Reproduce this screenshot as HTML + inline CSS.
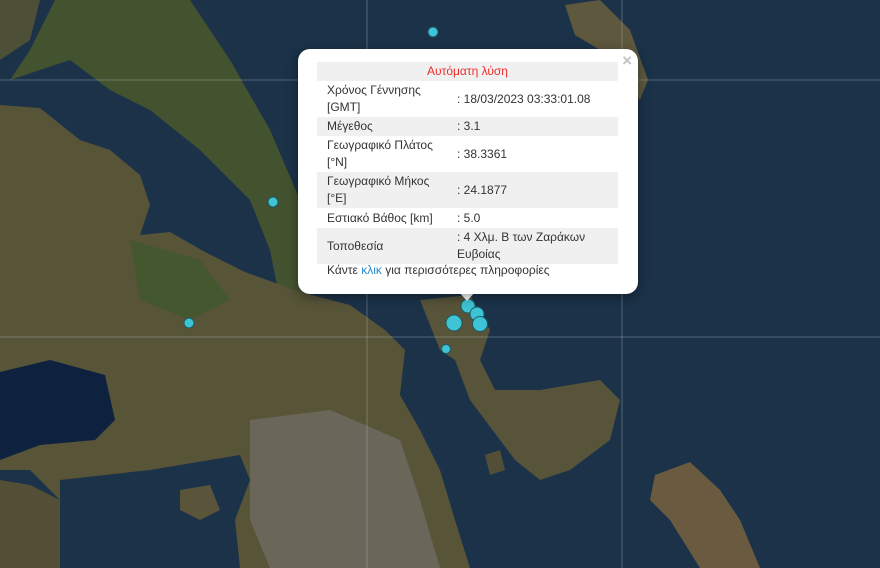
<!DOCTYPE html>
<html><head><meta charset="utf-8"><style>
body{margin:0;width:880px;height:568px;overflow:hidden;background:#1b3248;font-family:"Liberation Sans",sans-serif;}
svg{position:absolute;left:0;top:0}
.pop{position:absolute;left:298px;top:49px;width:340px;height:245px;background:#fff;border-radius:12px;box-shadow:0 3px 12px rgba(0,0,0,.4);}
.tip{position:absolute;left:459px;top:292px;width:0;height:0;border-left:8px solid transparent;border-right:8px solid transparent;border-top:9px solid #fff;}
.x{position:absolute;right:6px;top:2px;color:#c3c3c3;font-size:17px;font-weight:bold}
table{position:absolute;left:19px;top:13px;width:301px;border-collapse:collapse;font-size:12px;color:#333;line-height:17px}
td{padding:1px 10px;vertical-align:middle}
tr.g{background:#f0f0f0}
td.v{padding-left:0}
.ft{position:absolute;left:29px;top:214px;font-size:12px;color:#333}
.ft span{color:#2a8ac5}
</style></head><body>
<svg width="880" height="568" viewBox="0 0 880 568">
<rect width="880" height="568" fill="#1b3248"/>
<path d="M0 0H40L30 40 0 60Z" fill="#4d5036"/>
<path d="M55 0H190L230 60 270 130 300 200 310 290 280 300 270 250 250 200 200 150 150 110 110 90 70 60 40 70 10 80 30 50Z" fill="#44532f"/>
<path d="M0 105L40 108 80 140 110 150 140 175 150 205 140 235 170 232 205 252 245 272 300 292 350 305 385 330 405 350 400 395 420 430 440 470 455 520 470 568H60L60 500 30 470 0 470Z" fill="#575438"/>
<path d="M0 372L50 360 105 375 115 420 95 440 40 445 0 460Z" fill="#0e2240"/>
<path d="M60 480L150 470 240 455 250 480 235 520 240 568H60Z" fill="#1b3248"/>
<path d="M180 490L210 485 220 510 200 520 180 510Z" fill="#5a553a"/>
<path d="M250 420L330 410 400 440 420 500 440 568H270L250 520Z" fill="#6b665a"/>
<path d="M0 480L30 485 60 500 60 568H0Z" fill="#524f36"/>
<path d="M130 240L200 260 230 300 190 320 140 300Z" fill="#45572f"/>
<path d="M420 300L470 295 490 330 480 360 495 390 540 390 600 380 620 400 610 440 570 470 540 480 515 460 500 440 470 400 455 360 440 350Z" fill="#575439"/>
<path d="M565 5L600 0 630 30 648 80 640 100 620 80 600 50 575 35Z" fill="#5e583e"/>
<path d="M655 475L690 462 720 490 740 520 760 568H700L670 520 650 500Z" fill="#6a5a40"/>
<path d="M485 455L500 450 505 470 490 475Z" fill="#524f36"/>
<line x1="367" y1="0" x2="367" y2="568" stroke="#aab4bd" stroke-width="1" opacity=".4"/>
<line x1="622" y1="0" x2="622" y2="568" stroke="#aab4bd" stroke-width="1" opacity=".4"/>
<line x1="0" y1="80" x2="880" y2="80" stroke="#aab4bd" stroke-width="1" opacity=".4"/>
<line x1="0" y1="337" x2="880" y2="337" stroke="#aab4bd" stroke-width="1" opacity=".4"/>
<g fill="#3ec4d4" stroke="#1b5a66" stroke-width="1">
<circle cx="433" cy="32" r="5"/><circle cx="273" cy="202" r="5"/><circle cx="189" cy="323" r="5"/>
<circle cx="446" cy="349" r="4.5"/><circle cx="468" cy="306" r="7"/><circle cx="477" cy="314" r="7"/>
<circle cx="480" cy="324" r="7.5"/><circle cx="454" cy="323" r="8"/>
</g>
</svg>
<div class="tip"></div>
<div class="pop">
<div class="x">×</div>
<table>
<tr class="g"><td colspan="2" style="text-align:center;color:#ee2d2d;height:17px">Αυτόματη λύση</td></tr>
<tr style="height:36px"><td style="width:120px">Χρόνος Γέννησης [GMT]</td><td class="v">: 18/03/2023 03:33:01.08</td></tr>
<tr class="g" style="height:19px"><td>Μέγεθος</td><td class="v">: 3.1</td></tr>
<tr style="height:36px"><td>Γεωγραφικό Πλάτος [°N]</td><td class="v">: 38.3361</td></tr>
<tr class="g" style="height:35px"><td>Γεωγραφικό Μήκος [°E]</td><td class="v">: 24.1877</td></tr>
<tr style="height:20px"><td>Εστιακό Βάθος [km]</td><td class="v">: 5.0</td></tr>
<tr class="g" style="height:35px"><td>Τοποθεσία</td><td class="v">: 4 Χλμ. Β των Ζαράκων Ευβοίας</td></tr>
</table>
<div class="ft">Κάντε <span>κλικ</span> για περισσότερες πληροφορίες</div>
</div>
</body></html>
